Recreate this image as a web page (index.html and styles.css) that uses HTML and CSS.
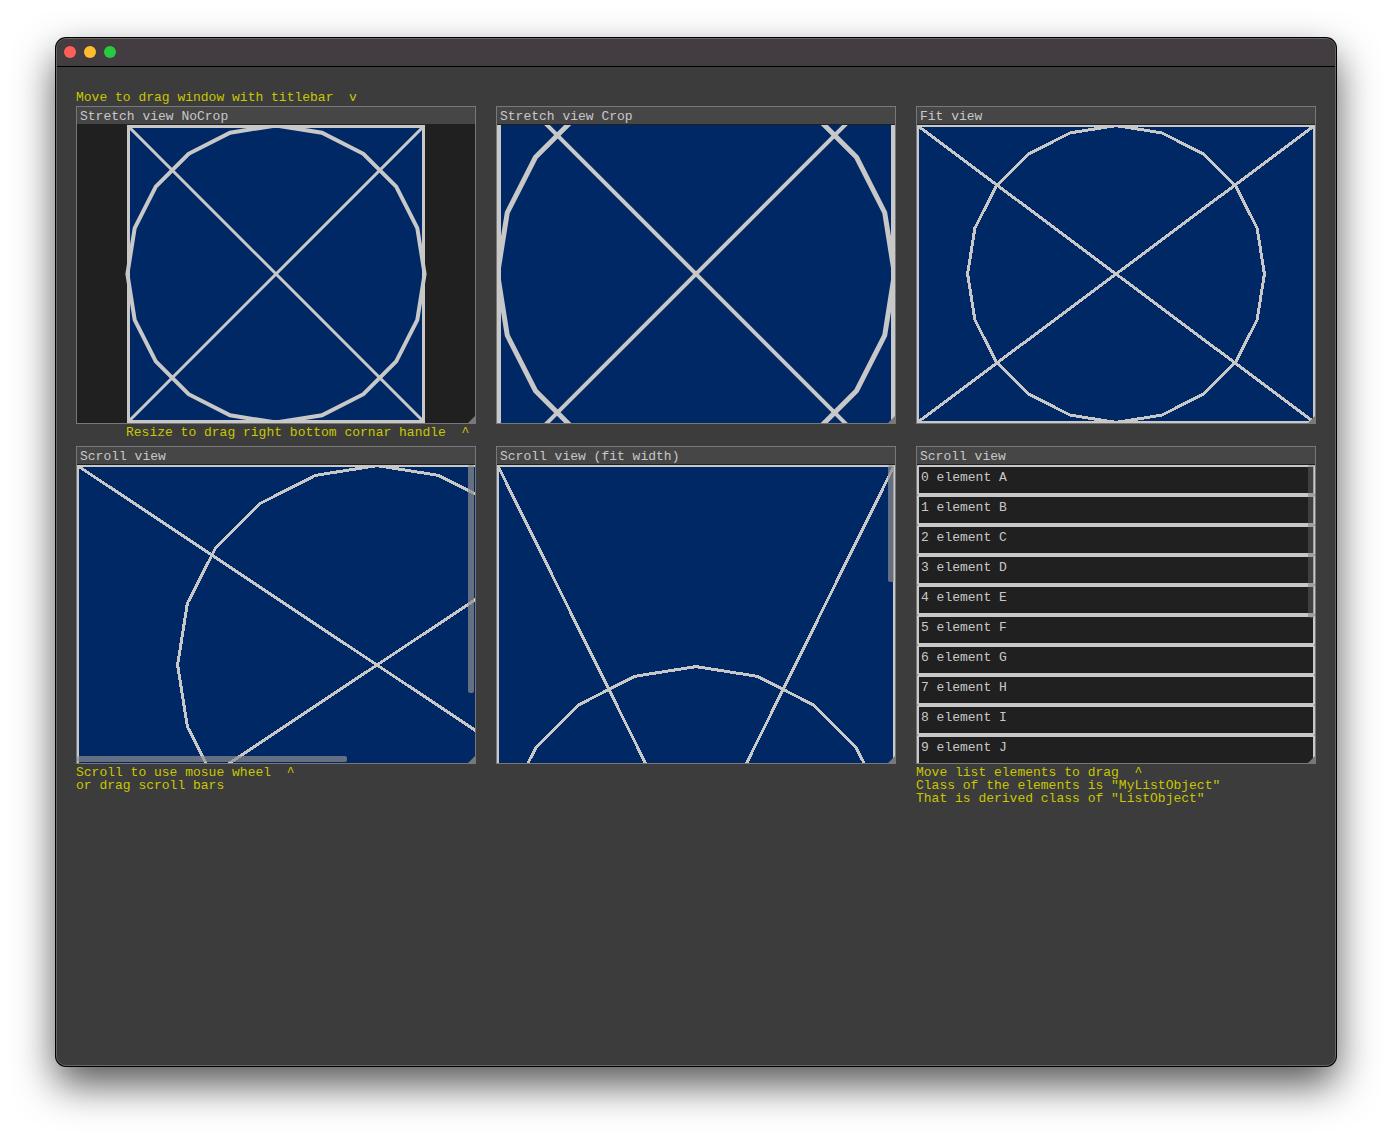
FILE: index.html
```html
<!DOCTYPE html>
<html lang="en">
<head>
<meta charset="utf-8">
<title>View examples</title>
<link rel="stylesheet" href="styles.css">
</head>
<body>
<svg class="defs" aria-hidden="true">
  <defs>
    <!-- 20-sided circle, radius 200, centred on the origin -->
    <polygon id="circle" vector-effect="non-scaling-stroke" points="200,0 190.2,61.8 161.8,117.6 117.6,161.8 61.8,190.2 0,200 -61.8,190.2 -117.6,161.8 -161.8,117.6 -190.2,61.8 -200,0 -190.2,-61.8 -161.8,-117.6 -117.6,-161.8 -61.8,-190.2 0,-200 61.8,-190.2 117.6,-161.8 161.8,-117.6 190.2,-61.8"/>
  </defs>
</svg>
<main class="window">
  <header class="titlebar">
    <button class="light close" aria-label="Close"></button>
    <button class="light minimize" aria-label="Minimize"></button>
    <button class="light zoom" aria-label="Zoom"></button>
  </header>
  <div class="content">
    <p class="note">Move to drag window with titlebar  v</p>
    <div class="grid">
      <section class="cell">
        <div class="panel">
          <h2 class="panel-title">Stretch view NoCrop</h2>
          <div class="view">
            <svg class="drawing smooth" viewBox="0 0 298 298" preserveAspectRatio="xMidYMid meet">
              <rect class="fill" width="298" height="298"/>
              <path d="M1 1L297 297M297 1L1 297"/>
              <rect x="1.5" y="1.5" width="295" height="295"/>
              <use href="#circle" transform="translate(149 149) scale(.743)"/>
            </svg>
          </div>
          <span class="handle"></span>
        </div>
        <p class="note note-indent">Resize to drag right bottom cornar handle  ^</p>
      </section>
      <section class="cell">
        <div class="panel">
          <h2 class="panel-title">Stretch view Crop</h2>
          <div class="view">
            <svg class="drawing smooth enlarged" viewBox="0 0 298 298" preserveAspectRatio="xMidYMid slice">
              <rect class="fill" width="298" height="298"/>
              <path d="M1 1L297 297M297 1L1 297"/>
              <rect x="1.5" y="1.5" width="295" height="295"/>
              <use href="#circle" transform="translate(149 149) scale(.743)"/>
            </svg>
          </div>
          <span class="handle"></span>
        </div>
      </section>
      <section class="cell">
        <div class="panel">
          <h2 class="panel-title">Fit view</h2>
          <div class="view">
            <svg class="drawing" viewBox="0 0 398 298" preserveAspectRatio="none">
              <rect class="fill" width="398" height="298"/>
              <path d="M1 1L397 297M397 1L1 297"/>
              <rect class="frame" x="1" y="1" width="396" height="296"/>
              <use href="#circle" transform="translate(199 149) scale(.742)"/>
            </svg>
          </div>
          <span class="handle"></span>
        </div>
      </section>
      <section class="cell">
        <div class="panel">
          <h2 class="panel-title">Scroll view</h2>
          <div class="view">
            <svg class="drawing" viewBox="0 0 398 298" preserveAspectRatio="xMinYMin slice">
              <rect class="fill" width="600" height="400"/>
              <path d="M1 1L599 399M599 1L1 399"/>
              <rect class="frame" x="1" y="1" width="598" height="398"/>
              <use href="#circle" transform="translate(300 200) scale(.997)"/>
            </svg>
            <span class="thumb thumb-y thumb-tall"></span>
            <span class="thumb thumb-x"></span>
          </div>
          <span class="handle"></span>
        </div>
        <p class="note">Scroll to use mosue wheel  ^
or drag scroll bars</p>
      </section>
      <section class="cell">
        <div class="panel">
          <h2 class="panel-title">Scroll view (fit width)</h2>
          <div class="view">
            <svg class="drawing" viewBox="0 0 398 298" preserveAspectRatio="xMinYMin slice">
              <rect class="fill" width="398" height="800"/>
              <path d="M1 1L397 799M397 1L1 799"/>
              <rect class="frame" x="1" y="1" width="396" height="798"/>
              <use href="#circle" transform="translate(199 400) scale(.992)"/>
            </svg>
            <span class="thumb thumb-y thumb-short"></span>
          </div>
          <span class="handle"></span>
        </div>
      </section>
      <section class="cell">
        <div class="panel">
          <h2 class="panel-title">Scroll view</h2>
          <div class="view">
            <ul class="list">
              <li>0 element A</li>
              <li>1 element B</li>
              <li>2 element C</li>
              <li>3 element D</li>
              <li>4 element E</li>
              <li>5 element F</li>
              <li>6 element G</li>
              <li>7 element H</li>
              <li>8 element I</li>
              <li>9 element J</li>
            </ul>
            <span class="thumb thumb-y thumb-list"></span>
          </div>
          <span class="handle"></span>
        </div>
        <p class="note">Move list elements to drag  ^
Class of the elements is "MyListObject"
That is derived class of "ListObject"</p>
      </section>
    </div>
  </div>
</main>
</body>
</html>
```
FILE: styles.css
```css
* {
  box-sizing: border-box;
}

body {
  display: flex;
  flex-direction: column;
  min-height: 100vh;
  margin: 0;
  padding: 38px 56px 74px;
  background: #fff;
  font: 13px/13px "Liberation Mono", monospace;
}

.defs {
  position: absolute;
  width: 0;
  height: 0;
}

.window {
  flex: 1;
  border: 1px solid #666;
  border-radius: 10px;
  background: #3c3c3c;
  box-shadow: 0 0 0 1px #000, 0 18px 40px rgba(0, 0, 0, .68);
  overflow: hidden;
}

.titlebar {
  display: flex;
  gap: 8px;
  height: 28px;
  padding: 7px;
  border-bottom: 1px solid #000;
  background: #433c40;
}

.light {
  width: 12px;
  height: 12px;
  padding: 0;
  border: 0;
  border-radius: 50%;
}

.close { background: #ff5f57; }
.minimize { background: #febc2e; }
.zoom { background: #28c840; }

.content {
  padding: 22px 19px;
}

.note {
  margin: 0;
  padding-top: 2px;
  color: #c8c800;
  white-space: pre;
}

.note-indent {
  padding-left: 50px;
}

.grid {
  display: grid;
  grid-template-columns: repeat(3, minmax(0, 1fr));
  gap: 7px 20px;
  margin-top: 2px;
}

.panel {
  position: relative;
  border: 1px solid #787878;
  background: #202020;
}

.panel-title {
  margin: 0 0 1px;
  padding: 3px 3px 1px;
  background: #464646;
  color: #c8c8c8;
  font: inherit;
}

.view {
  position: relative;
  height: 298px;
  overflow: hidden;
}

.drawing {
  display: block;
  width: 100%;
  height: 100%;
  fill: none;
  stroke: #c8c8c8;
  stroke-width: 3px;
  shape-rendering: crispEdges;
}

.smooth {
  shape-rendering: auto;
}

.smooth use {
  stroke-width: 4px;
}

.enlarged use {
  stroke-width: 5px;
}

.frame {
  stroke-width: 2px;
}

.fill {
  fill: #002864;
  stroke: none;
}

.handle {
  position: absolute;
  right: -1px;
  bottom: -1px;
  width: 9px;
  height: 9px;
  background: #787878;
  clip-path: polygon(100% 0, 100% 100%, 0 100%);
}

.thumb {
  position: absolute;
  border-radius: 2px;
  background: rgba(143, 143, 143, .7);
}

.thumb-y {
  top: 0;
  right: 1px;
  width: 6px;
}

.thumb-x {
  left: 0;
  bottom: 1px;
  width: 270px;
  height: 6px;
}

.thumb-tall { height: 228px; }
.thumb-short { height: 117px; }

.thumb-list {
  height: 153px;
  background: rgba(106, 106, 106, .43);
}

.list {
  margin: 0;
  padding: 0;
  list-style: none;
}

.list li {
  height: 30px;
  padding: 4px 2px;
  border: 2px solid #c8c8c8;
  border-radius: 1px;
  color: #c8c8c8;
}
```
